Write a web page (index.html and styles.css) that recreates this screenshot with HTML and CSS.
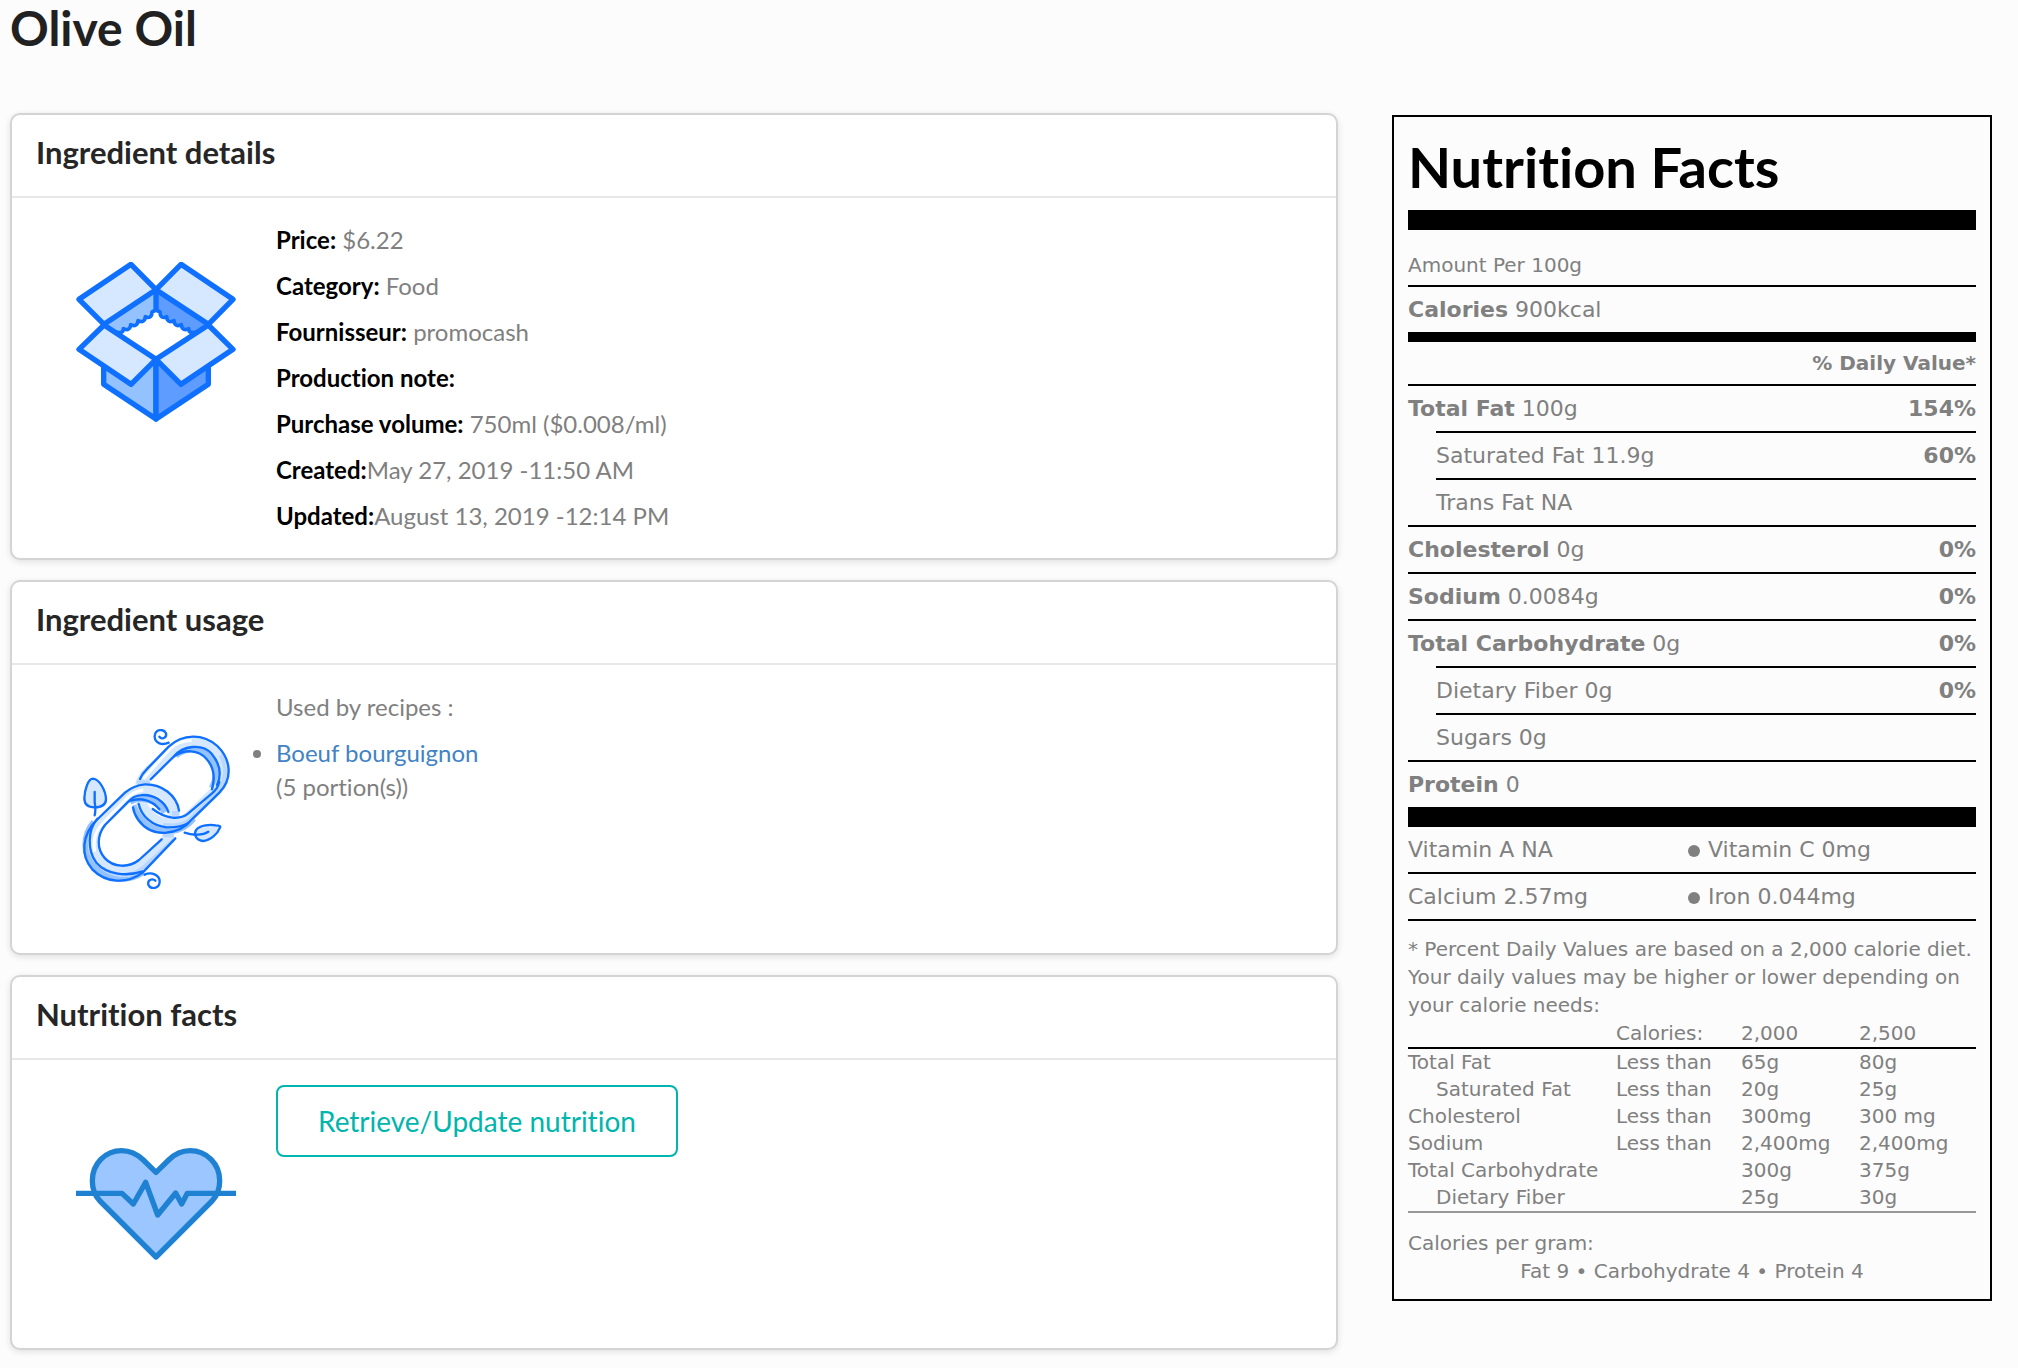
FILE: index.html
```html
<!DOCTYPE html>
<html lang="en">
<head>
    <meta charset="UTF-8">
    <meta name="viewport" content="width=device-width, initial-scale=1.0">
    <title>Olive Oil</title>
    <link rel="stylesheet" href="styles.css">
</head>
<body>
    <h1 class="page-title">Olive Oil</h1>

    <div class="layout">
        <main class="cards">
            <section class="card">
                <h2 class="card-header">Ingredient details</h2>
                <div class="card-body">
                    <!-- open box -->
                    <svg class="card-icon" viewBox="48 66 480 480" fill="none" stroke="#0f70ff" stroke-width="16" stroke-linejoin="round">
                        <path d="M131 370V433L288 537V358Z" fill="#94c1ff"/>
                        <path d="M445 370V433L288 537V358Z" fill="#5e9cff"/>
                        <path d="M288 149L132 253L178 282L288 212Z" fill="#94c1ff" stroke="none"/>
                        <path d="M288 149L445 253L398 282L288 212Z" fill="#5e9cff" stroke="none"/>
                        <path d="M288 149V212"/>
                        <path d="M170 276c10 4 20 2 20-10c12 6 21 2 22-12c12 6 21 2 22-12c12 6 21 2 22-12c12 6 20 0 20-14l12-6l12 6c0 14 8 20 20 14c1 14 10 18 22 12c1 14 10 18 22 12c1 14 10 18 22 12c0 12 10 14 20 10" stroke-width="11"/>
                        <path d="M57 178L213 73L288 149L132 253Z" fill="#d6e8ff"/>
                        <path d="M519 178L363 73L288 149L445 253Z" fill="#d6e8ff"/>
                        <path d="M57 328L213 433L288 358L132 255Z" fill="#d6e8ff"/>
                        <path d="M519 328L363 433L288 358L445 255Z" fill="#d6e8ff"/>
                    </svg>
                    <div class="card-content">
                        <p><b>Price:</b> $6.22</p>
                        <p><b>Category:</b> Food</p>
                        <p><b>Fournisseur:</b> promocash</p>
                        <p><b>Production note:</b></p>
                        <p><b>Purchase volume:</b> 750ml ($0.008/ml)</p>
                        <p><b>Created:</b>May 27, 2019 -11:50 AM</p>
                        <p><b>Updated:</b>August 13, 2019 -12:14 PM</p>
                    </div>
                </div>
            </section>

            <section class="card">
                <h2 class="card-header">Ingredient usage</h2>
                <div class="card-body">
                    <!-- chain links -->
                    <svg class="card-icon" viewBox="48 57 480 480" fill="none" stroke-linecap="round" stroke-linejoin="round">
                        <!-- upper link -->
                        <g stroke-linecap="butt">
                            <path d="M345 135C375 108 425 108 450 140C475 172 475 205 458 236" stroke="#94c1ff" stroke-width="24"/>
                            <path d="M228 284C238 335 285 368 330 363C360 360 380 350 400 325" stroke="#94c1ff" stroke-width="20"/>
                            <path d="M241 226Q246 205 264 187L335 121C370 84 430 84 465 120C502 155 502 205 470 240L391 317C355 352 290 345 262 310Q248 294 243 276" stroke="#d6e8ff" stroke-width="32"/>
                            <path d="M482 135C500 170 500 210 473 245L396 322C375 345 340 350 310 344" stroke="#b9d7ff" stroke-width="12"/>
                            <path d="M250 206L330 116C350 98 370 92 395 91" stroke="#ffffff" stroke-width="9"/>
                        </g>
                        <!-- lower link -->
                        <g stroke-linecap="butt">
                            <path d="M104 338C70 375 72 435 103 472C142 511 205 513 248 484" stroke="#94c1ff" stroke-width="24"/>
                            <path d="M208 272C240 255 290 262 318 305" stroke="#94c1ff" stroke-width="26"/>
                            <path d="M328 372L318 394L243 466C210 495 155 490 122 455C90 420 92 370 125 337L200 264C240 225 290 228 325 265Q340 283 343 318" stroke="#d6e8ff" stroke-width="32"/>
                            <path d="M340 390L247 475C210 503 165 500 130 475" stroke="#b9d7ff" stroke-width="11"/>
                            <path d="M104 425C98 385 108 365 124 344L196 269C215 250 230 242 250 240" stroke="#ffffff" stroke-width="9"/>
                            <path d="M230 218H270M308 374L342 376M336 310H358" stroke="#b9d7ff" stroke-width="14"/>
                        </g>
                        <g stroke="#0f70ff" stroke-width="7">
                            <path d="M240 207Q246 192 262 176L326 110C368 70 430 70 472 108C515 150 517 208 478 248L396 328C355 378 275 385 235 330Q222 312 219 292"/>
                            <path d="M236 282C244 318 276 348 320 352C350 353 370 348 384 340"/>
                            <path d="M272 208L342 139C368 108 425 98 455 131C482 164 485 195 471 225"/>
                            <path d="M342 139C375 116 415 120 439 146C462 172 466 203 456 238"/>
                            <path d="M478 216C474 232 466 242 456 250L384 311C360 330 318 328 278 297"/>
                            <path d="M357 302C350 255 305 222 255 223C230 225 212 233 195 248L110 330C65 375 61 437 97 478C138 520 200 523 248 488L346 385"/>
                            <path d="M112 326C82 360 82 422 109 458C142 495 200 500 248 484"/>
                            <path d="M305 388L237 450C205 475 160 472 135 445C108 415 112 375 135 345L205 275C225 250 265 250 293 266Q318 282 325 306"/>
                            <path d="M208 273C240 262 275 268 298 298"/>
                            <!-- leaves -->
                            <path d="M99 206C118 208 137 240 138 268C137 288 120 292 104 292C84 292 73 284 73 264C74 240 84 206 99 206Z" fill="#d6e8ff"/>
                            <path d="M104 246V276Q108 300 104 316"/>
                            <path d="M480 353C473 371 452 392 428 393C407 390 400 372 409 359C421 345 450 343 467 346C477 347 483 348 480 353Z" fill="#d6e8ff"/>
                            <path d="M445 365C430 375 400 378 374 368"/>
                            <!-- tendrils -->
                            <path d="M326 98C305 108 283 98 284 78C286 58 310 54 318 70C321 84 304 90 298 80"/>
                            <path d="M254 494C276 484 300 496 299 516C297 537 272 540 265 524C262 509 278 504 286 512"/>
                        </g>
                    </svg>
                    <div class="card-content">
                        <p>Used by recipes :</p>
                        <ul class="recipes">
                            <li><a href="#">Boeuf bourguignon</a><br>(5 portion(s))</li>
                        </ul>
                    </div>
                </div>
            </section>

            <section class="card">
                <h2 class="card-header">Nutrition facts</h2>
                <div class="card-body">
                    <!-- heartbeat -->
                    <svg class="card-icon" viewBox="48 12 480 480" fill="none" stroke="#1e81d2" stroke-width="16" stroke-linejoin="round">
                        <path d="M288 157L250 120C228 99 207 92 185 92C135 92 97 132 97 182C97 207 104 227 120 243L288 411L456 243C472 227 479 207 479 182C479 132 440 92 390 92C367 92 347 99 326 120Z" fill="#9bc6ff"/>
                        <path d="M48 220H186L220 252L257 187L293 285L347 219L365 252L382 220H528"/>
                    </svg>
                    <div class="card-content">
                        <button type="button" class="btn-outline">Retrieve/Update nutrition</button>
                    </div>
                </div>
            </section>
        </main>

        <aside class="label">
            <h2 class="label-title">Nutrition Facts</h2>
            <table class="facts">
                <tbody>
                    <tr class="serving"><td colspan="2">Amount Per 100g</td></tr>
                    <tr><td colspan="2"><b>Calories</b> 900kcal</td></tr>
                    <tr class="thick"><th colspan="2">% Daily Value*</th></tr>
                    <tr><td><b>Total Fat</b> 100g</td><td>154%</td></tr>
                    <tr class="sub"><td><span>Saturated Fat 11.9g</span></td><td>60%</td></tr>
                    <tr class="sub"><td><span>Trans Fat NA</span></td><td></td></tr>
                    <tr><td><b>Cholesterol</b> 0g</td><td>0%</td></tr>
                    <tr><td><b>Sodium</b> 0.0084g</td><td>0%</td></tr>
                    <tr><td><b>Total Carbohydrate</b> 0g</td><td>0%</td></tr>
                    <tr class="sub"><td><span>Dietary Fiber 0g</span></td><td>0%</td></tr>
                    <tr class="sub"><td><span>Sugars 0g</span></td><td></td></tr>
                    <tr><td><b>Protein</b> 0</td><td></td></tr>
                </tbody>
            </table>
            <table class="vitamins">
                <tbody>
                    <tr><td class="col-left">Vitamin A NA</td><td><span class="dot"></span>Vitamin C 0mg</td></tr>
                    <tr><td>Calcium 2.57mg</td><td><span class="dot"></span>Iron 0.044mg</td></tr>
                </tbody>
            </table>
            <p class="small">* Percent Daily Values are based on a 2,000 calorie diet. Your daily values may be higher or lower depending on your calorie needs:</p>
            <table class="needs">
                <thead>
                    <tr><th class="col-name"></th><th class="col-limit">Calories:</th><th class="col-value">2,000</th><th>2,500</th></tr>
                </thead>
                <tbody>
                    <tr><td>Total Fat</td><td>Less than</td><td>65g</td><td>80g</td></tr>
                    <tr><td class="indent">Saturated Fat</td><td>Less than</td><td>20g</td><td>25g</td></tr>
                    <tr><td>Cholesterol</td><td>Less than</td><td>300mg</td><td>300 mg</td></tr>
                    <tr><td>Sodium</td><td>Less than</td><td>2,400mg</td><td>2,400mg</td></tr>
                    <tr><td>Total Carbohydrate</td><td></td><td>300g</td><td>375g</td></tr>
                    <tr><td class="indent">Dietary Fiber</td><td></td><td>25g</td><td>30g</td></tr>
                </tbody>
            </table>
            <p class="small">Calories per gram:</p>
            <p class="small centered">Fat 9 • Carbohydrate 4 • Protein 4</p>
        </aside>
    </div>
</body>
</html>
```

FILE: styles.css
```css
* {
    box-sizing: border-box;
}

body {
    margin: 0;
    padding: 0 26px 18px 10px;
    background-color: #fcfcfc;
    color: #808080;
    font-family: Lato, "Open Sans", sans-serif;
    font-size: 24px;
    font-variant-ligatures: none;
    line-height: 34px;
}

h1, h2, p, ul {
    margin: 0;
}

.page-title {
    margin-bottom: 57px;
    color: #212121;
    font-size: 48px;
    line-height: 56px;
}

.layout {
    display: grid;
    grid-template-columns: 1fr 600px;
    gap: 54px;
    align-items: start;
}

.cards {
    display: flex;
    flex-direction: column;
    gap: 20px;
}

.card {
    background-color: #fff;
    border: 2px solid #d4d4d5;
    border-radius: 10px;
    box-shadow: 0 2px 6px rgba(34, 36, 38, 0.12);
}

.card-header {
    padding: 18px 24px 25px;
    border-bottom: 2px solid #e8e8e9;
    color: #262626;
    font-size: 31px;
    line-height: 38px;
}

.card-body {
    display: flex;
    align-items: flex-start;
    gap: 40px;
    padding-left: 64px;
}

.card-icon {
    flex: none;
    width: 160px;
    height: 160px;
    margin: 64px 0;
}

.card-content {
    display: flex;
    flex-direction: column;
    align-items: flex-start;
    gap: 12px;
    padding: 25px 24px 25px 0;
}

.card-content b {
    color: #000;
}

.recipes {
    padding: 0;
}

.recipes a {
    color: #4183c4;
    text-decoration: none;
}

.btn-outline {
    height: 72px;
    padding: 0 40px;
    background: transparent;
    border: 2px solid #00b5ad;
    border-radius: 8px;
    color: #00b5ad;
    font-family: inherit;
    font-size: 28px;
    font-variant-ligatures: none;
    cursor: pointer;
}

/* nutrition label */
.label {
    margin-top: 2px;
    padding: 14px;
    border: 2px solid #000;
    font-family: Verdana, "DejaVu Sans", sans-serif;
    font-size: 22px;
    line-height: 28px;
}

.label-title {
    padding: 4px 0 11px;
    border-bottom: 20px solid #000;
    color: #000;
    font-family: Lato, sans-serif;
    font-size: 56px;
    line-height: 64px;
}

.label table {
    width: 100%;
    border-collapse: separate;
    border-spacing: 0;
}

.label td,
.label th {
    padding: 0;
    text-align: left;
    white-space: nowrap;
}

.facts td {
    height: 47px;
    border-top: 2px solid #000;
}

.facts td:nth-child(2) {
    font-weight: bold;
    text-align: right;
}

.facts .serving td {
    height: 55px;
    padding-top: 14px;
    border-top: none;
    font-size: 20px;
}

.facts .thick th {
    height: 52px;
    border-top: 10px solid #000;
    font-size: 20px;
    text-align: right;
}

/* the rule above a sub row starts at the indent */
.facts .sub td:first-child {
    padding-left: 28px;
    border-top: none;
}

.facts .sub span {
    display: block;
    border-top: 2px solid #000;
    line-height: 45px;
}

.vitamins {
    border-top: 20px solid #000;
}

.vitamins td {
    height: 47px;
    border-bottom: 2px solid #000;
}

.col-left {
    width: 280px;
}

.dot {
    display: inline-block;
    width: 12px;
    height: 12px;
    margin-right: 8px;
    border-radius: 50%;
    background-color: #808080;
}

.small,
.needs {
    font-size: 20px;
}

.small {
    padding-top: 14px;
}

.needs {
    margin-bottom: 2px;
}

.needs th {
    border-bottom: 2px solid #000;
    font-weight: normal;
}

.needs td {
    line-height: 27px;
}

.needs tbody tr:last-child td {
    border-bottom: 2px solid #999;
}

.col-name {
    width: 208px;
}

.col-limit {
    width: 125px;
}

.col-value {
    width: 118px;
}

.needs .indent {
    padding-left: 28px;
}

.small.centered {
    padding-top: 0;
    text-align: center;
}
```
